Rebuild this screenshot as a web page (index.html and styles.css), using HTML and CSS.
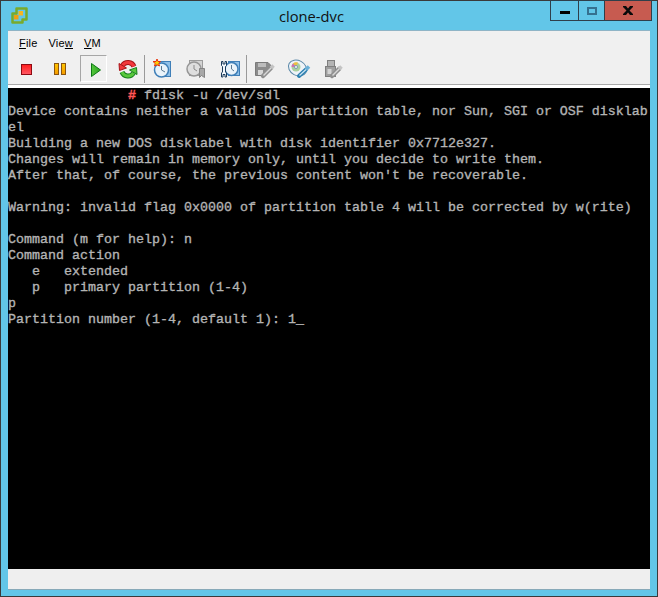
FILE: index.html
```html
<!DOCTYPE html>
<html lang="en">
<head>
<meta charset="utf-8">
<title>clone-dvc</title>
<link rel="stylesheet" href="styles.css">
</head>
<body>
<div class="window">
  <header class="titlebar">
    <svg class="app-icon" width="18" height="18" viewBox="0 0 18 18">
      <path d="M6.500 1.500H16.500V12.500H12.500V15.500H2.500V6.500H6.500Z" fill="none" stroke="#79aa2c" stroke-width="2.500" stroke-linejoin="round"/>
      <rect x="4" y="8" width="4.500" height="4.500" fill="#f0a010"/>
      <rect x="8.500" y="4" width="4.500" height="4.500" fill="#f7b520"/>
    </svg>
    <div class="title">clone-dvc</div>
    <div class="controls">
      <div class="ctl ctl-min"><span class="min-bar"></span></div>
      <div class="ctl ctl-max"><span class="max-ring"></span></div>
      <div class="ctl ctl-close">
        <svg width="10" height="9" viewBox="0 0 10 9"><path d="M0 0H3L5 2.500L7 0H10V1L6.500 4.500L10 8V9H7L5 6.500L3 9H0V8L3.500 4.500L0 1Z" fill="#0a0a0a"/></svg>
      </div>
    </div>
  </header>
  <main class="client">
    <div class="panel">
      <nav class="menu">
        <span><u>F</u>ile</span>
        <span>Vie<u>w</u></span>
        <span><u>V</u>M</span>
      </nav>
      <div class="toolbar">
        <div class="group">
          <div class="btn">
            <svg width="27" height="27" viewBox="0 0 27 27"><defs><linearGradient id="r" x1="0" y1="0" x2="0" y2="1"><stop offset="0" stop-color="#ff1c1c"/><stop offset="1" stop-color="#ff5a66"/></linearGradient></defs><rect x="8.500" y="9.500" width="10" height="10" fill="url(#r)" stroke="#8e0a12"/></svg>
          </div>
          <div class="btn btn-tight">
            <svg width="27" height="27" viewBox="0 0 27 27"><defs><linearGradient id="o" x1="0" y1="0" x2="0" y2="1"><stop offset="0" stop-color="#ffc800"/><stop offset="1" stop-color="#f59a00"/></linearGradient></defs><rect x="7.500" y="8.500" width="4" height="11" fill="url(#o)" stroke="#8a5510"/><rect x="14.500" y="8.500" width="4" height="11" fill="url(#o)" stroke="#8a5510"/></svg>
          </div>
          <div class="btn btn-active">
            <svg width="25" height="25" viewBox="1 1 25 25"><defs><linearGradient id="g" x1="0" y1="0" x2="1" y2="0"><stop offset="0" stop-color="#55c83c"/><stop offset="1" stop-color="#2fa524"/></linearGradient></defs><path d="M11.500 8.500L20.500 15L11.500 21.500Z" fill="url(#g)" stroke="#0e7a16"/></svg>
          </div>
          <div class="btn">
            <svg width="27" height="27" viewBox="0 0 27 27">
              <path d="M20 11.500A6.500 6.500 0 0 0 8.500 10.500" fill="none" stroke="#a81418" stroke-width="5"/>
              <path d="M20 11.500A6.500 6.500 0 0 0 8.500 10.500" fill="none" stroke="#f2383c" stroke-width="3"/>
              <path d="M5 8.500L12.500 13L5.500 15.500Z" fill="#f2383c" stroke="#a81418" stroke-linejoin="round"/>
              <path d="M8 17A6.500 6.500 0 0 0 19.500 18" fill="none" stroke="#17801e" stroke-width="5"/>
              <path d="M8 17A6.500 6.500 0 0 0 19.500 18" fill="none" stroke="#58c83c" stroke-width="3"/>
              <path d="M23 19.500L15.500 15L22.500 12.500Z" fill="#58c83c" stroke="#17801e" stroke-linejoin="round"/>
            </svg>
          </div>
        </div>
        <div class="sep"></div>
        <div class="group">
          <div class="btn">
            <svg width="27" height="27" viewBox="0 0 27 27">
              <rect x="10.500" y="6.500" width="12" height="15" fill="#8fc0e8" stroke="#3f7fb8"/>
              <circle cx="13.500" cy="15" r="7" fill="#eaf3fa" stroke="#3f7fb8" stroke-width="1.500"/>
              <path d="M13.500 11V15L17 17" fill="none" stroke="#5a7a94"/>
              <path d="M9 4L10 6.500L12.500 6.500L10.800 8.500L11.500 11L9 9.800L6.500 11L7.200 8.500L5 6.500L8 6.500Z" fill="#fbd000" stroke="#e83010" stroke-width="1"/>
            </svg>
          </div>
          <div class="btn">
            <svg width="27" height="27" viewBox="0 0 27 27">
              <rect x="7.500" y="5.500" width="13" height="15" fill="#d4d4d4" stroke="#9c9c9c"/>
              <circle cx="12" cy="14" r="7" fill="#dedede" stroke="#969696" stroke-width="1.500"/>
              <path d="M12 10V14L15 16" fill="none" stroke="#8a8a8a"/>
              <path d="M17.500 13.500V22.500L19.500 20.500L22.500 22.500V13.500Z" fill="#a8a8a8" stroke="#848484"/>
            </svg>
          </div>
          <div class="btn">
            <svg width="27" height="27" viewBox="0 0 27 27">
              <rect x="12.500" y="6.500" width="11" height="14" fill="#8fc0e8" stroke="#3f7fb8"/>
              <circle cx="15.500" cy="14" r="6.500" fill="#eaf3fa" stroke="#3f7fb8" stroke-width="1.500"/>
              <path d="M15.500 10V14L18 16" fill="none" stroke="#5a7a94"/>
              <path d="M5.500 6.500H7V9H9V6.500H10.500V10.500L9.500 11.500V17L10.500 18V22H9V19.500H7V22H5.500V18L6.500 17V11.500L5.500 10.500Z" fill="#f4f8fc" stroke="#1c3c5c"/>
            </svg>
          </div>
        </div>
        <div class="sep sep-wide"></div>
        <div class="group">
          <div class="btn">
            <svg width="27" height="27" viewBox="0 0 27 27">
              <path d="M4.500 7.500H17L19.500 10V12L13 20.500H4.500Z" fill="#8c8c8c" stroke="#7a7a7a"/>
              <rect x="7" y="8" width="8" height="4" fill="#bdbdbd"/>
              <rect x="7" y="15" width="5" height="5" fill="#d8d8d8"/>
              <path d="M12 21L20 13" stroke="#8f8f8f" stroke-width="4.500" stroke-linecap="round"/>
              <path d="M20 13L22.500 10.500" stroke="#c4c4c4" stroke-width="3.500"/>
              <path d="M12.500 20.500L20 13" stroke="#d8d8d8" stroke-width="1.500"/>
            </svg>
          </div>
          <div class="btn">
            <svg width="27" height="27" viewBox="0 0 27 27">
              <ellipse cx="12.500" cy="13" rx="9.500" ry="7.500" transform="rotate(28 12.500 13)" fill="#eef3f8" stroke="#5a88a8"/>
              <circle cx="11" cy="12" r="4.500" fill="#a8d0a0"/>
              <path d="M11 12L8 8.500A5 5 0 0 1 13 7.500Z" fill="#f0c040"/>
              <path d="M11 12L6.500 12A5 5 0 0 1 8 8.500Z" fill="#d070b0"/>
              <circle cx="11" cy="12" r="1.500" fill="#fff" stroke="#7a9ab0"/>
              <path d="M14 21L21 14.500" stroke="#2a7fb0" stroke-width="4" stroke-linecap="round"/>
              <path d="M21 14.500L24 11.500" stroke="#6ab0d8" stroke-width="3.500"/>
              <path d="M14.500 20.500L21 14.500" stroke="#cfe6f4" stroke-width="1.200"/>
            </svg>
          </div>
          <div class="btn">
            <svg width="27" height="27" viewBox="0 0 27 27">
              <rect x="8.500" y="5.500" width="7" height="6" fill="#b4b4b4" stroke="#808080"/>
              <rect x="6.500" y="11.500" width="10" height="10" fill="#a0a0a0" stroke="#808080"/>
              <rect x="8.500" y="14" width="4" height="5" fill="#d4d4d4"/>
              <path d="M13 21L20 14" stroke="#8f8f8f" stroke-width="4.500" stroke-linecap="round"/>
              <path d="M20 14L22.500 11.500" stroke="#c4c4c4" stroke-width="3.500"/>
              <path d="M13.500 20.500L20 14" stroke="#d8d8d8" stroke-width="1.500"/>
            </svg>
          </div>
        </div>
      </div>
    </div>
    <pre class="terminal">               <span class="prompt">#</span> fdisk -u /dev/sdl
Device contains neither a valid DOS partition table, nor Sun, SGI or OSF disklab
el
Building a new DOS disklabel with disk identifier 0x7712e327.
Changes will remain in memory only, until you decide to write them.
After that, of course, the previous content won't be recoverable.

Warning: invalid flag 0x0000 of partition table 4 will be corrected by w(rite)

Command (m for help): n
Command action
   e   extended
   p   primary partition (1-4)
p
Partition number (1-4, default 1): 1<span class="cursor">_</span></pre>
    <div class="statusbar"></div>
  </main>
</div>
</body>
</html>
```
FILE: styles.css
```css
* { box-sizing: border-box; }
html, body { margin: 0; padding: 0; }
body { width: 658px; height: 597px; overflow: hidden; background: #333; }
.window {
  width: 658px; height: 597px;
  border: 1px solid #3a3a3a;
  background: #62c6e8;
  display: flex; flex-direction: column;
  padding: 0 7px 7px;
}
.titlebar { height: 29px; display: flex; align-items: flex-start; flex: none; }
.app-icon { margin: 6px 0 0 2px; flex: none; }
.title {
  flex: 1; text-align: center;
  font: 14.7px/18px "Open Sans", sans-serif; color: #111;
  padding: 6px 0 0 45px;
}
.controls { display: flex; height: 21px; margin-right: -2px; margin-top: -1px; border: 1px solid #2f3f4a; flex: none; }
.ctl { height: 100%; display: flex; align-items: center; justify-content: center; }
.ctl-min { width: 28px; border-right: 1px solid #2f3f4a; }
.ctl-max { width: 26px; border-right: 1px solid #2f3f4a; }
.ctl-close { width: 46px; background: #c75b50; }
.min-bar { width: 10px; height: 3px; background: #000; margin-top: 4px; }
.max-ring { width: 10px; height: 8px; border: 2px solid #35708f; }
.client { flex: 1; display: flex; flex-direction: column; min-height: 0; border-top: 1px solid #8fb4c6; box-shadow: 0 1px 0 #88a9b8; }
.panel { height: 54px; background: #f0f0f0; border-bottom: 1px solid #a9a9a9; flex: none; }
.menu {
  height: 24px; display: flex; gap: 11px; padding: 5px 0 0 11px;
  font: 11px/14px "Liberation Sans", sans-serif; color: #000; letter-spacing: .2px;
}
.menu u { text-underline-offset: 1px; }
.toolbar { display: flex; height: 27px; padding-left: 5px; }
.group { display: flex; gap: 7px; }
.btn { width: 27px; height: 27px; flex: none; }
.btn svg { display: block; }
.btn-tight { margin-right: -1px; }
.btn-active { border: 1px solid; border-color: #a6a6a6 #fff #fff #a6a6a6; }
.sep { width: 1px; height: 28px; background: #9a9a9a; margin: 0 3px; flex: none; }
.sep-wide { margin-right: 4px; }
.terminal {
  margin: 0; flex: none; height: 484px;
  border-top: 3px solid #fff;
  background: #000; background-clip: padding-box;
  color: #b4b4b4;
  font: 13.333px/16px "Liberation Mono", monospace;
  -webkit-text-stroke: 0.35px #b4b4b4;
  overflow: hidden; white-space: pre;
}
.prompt { color: #ff5555; -webkit-text-stroke-color: #ff5555; font-weight: bold; }
.statusbar { flex: 1; background: #efefef; }
```
